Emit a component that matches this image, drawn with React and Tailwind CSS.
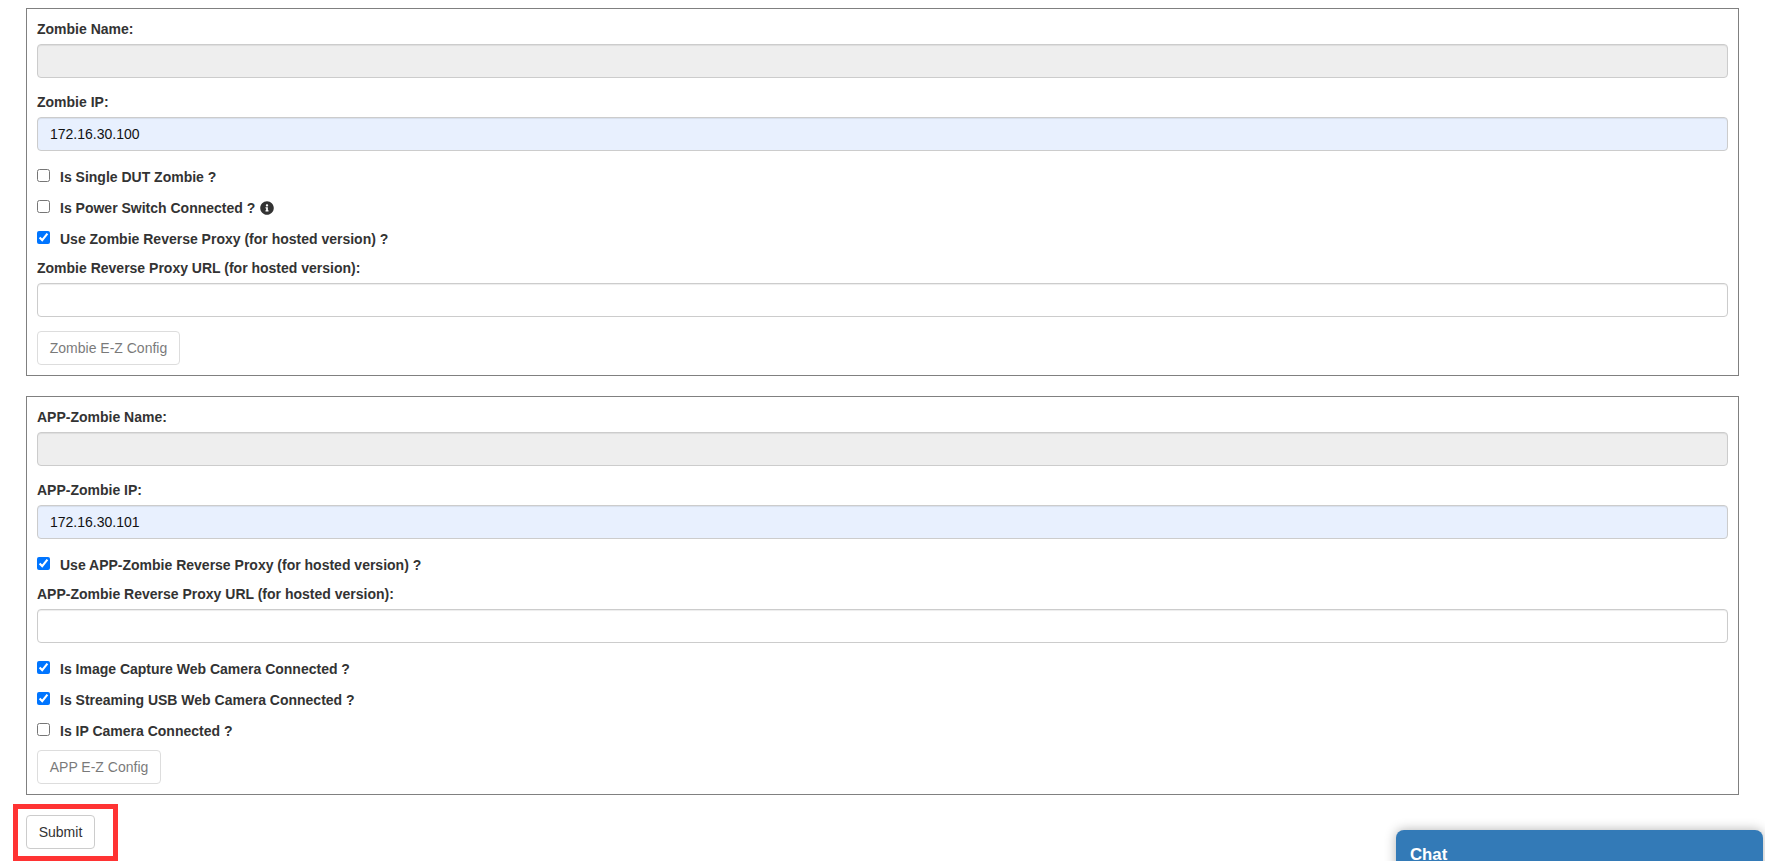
import { FaInfoCircle } from "react-icons/fa";

const inputClass =
  "block h-[34px] w-full rounded-[4px] border border-[#ccc] px-3 text-[14px] text-[#111] shadow-[inset_0_1px_1px_rgba(0,0,0,0.075)] outline-none";

const Field = ({ label, value, disabled, autofilled }) => (
  <div className="mb-[14px]">
    <label className="mb-1 block text-[14px] leading-[21px] font-bold text-[#333]">
      {label}
    </label>
    <input
      readOnly
      disabled={disabled}
      value={value || ""}
      className={`${inputClass} ${disabled ? "bg-[#eee]" : autofilled ? "bg-[#e8f0fe]" : "bg-white"}`}
    />
  </div>
);

const Check = ({ label, checked, children }) => (
  <div className="mb-[10px] flex h-[21px] items-center">
    <input
      type="checkbox"
      readOnly
      checked={!!checked}
      className="m-0 mb-[4px] h-[13px] w-[13px] shrink-0"
    />
    <label className="ml-[10px] text-[14px] leading-[21px] font-bold text-[#333]">
      {label}
    </label>
    {children}
  </div>
);

const ConfigButton = ({ width, children }) => (
  <button
    disabled
    className={`h-[34px] rounded-[4px] border border-[#ccc] bg-white text-[14px] text-[#333] opacity-65 ${width}`}
  >
    {children}
  </button>
);

export default function App() {
  return (
    <div className="relative h-[861px] overflow-hidden bg-white px-[26px] pt-2 font-['Liberation_Sans',Arial,sans-serif]">
      <section className="h-[368px] border border-[#808080] px-[10px] pt-[10px]">
        <Field label="Zombie Name:" disabled />
        <Field label="Zombie IP:" value="172.16.30.100" autofilled />
        <div className="mt-4">
          <Check label="Is Single DUT Zombie ?" />
          <Check label="Is Power Switch Connected ?">
            <FaInfoCircle className="mb-[2px] ml-[5px] text-[14px] text-[#333]" />
          </Check>
          <Check label="Use Zombie Reverse Proxy (for hosted version) ?" checked />
        </div>
        <div className="mt-[-2px]">
          <Field label="Zombie Reverse Proxy URL (for hosted version):" />
        </div>
        <ConfigButton width="w-[143px]">Zombie E-Z Config</ConfigButton>
      </section>

      <section className="mt-5 h-[399px] border border-[#808080] px-[10px] pt-[10px]">
        <Field label="APP-Zombie Name:" disabled />
        <Field label="APP-Zombie IP:" value="172.16.30.101" autofilled />
        <div className="mt-4">
          <Check label="Use APP-Zombie Reverse Proxy (for hosted version) ?" checked />
        </div>
        <div className="mt-[-2px]">
          <Field label="APP-Zombie Reverse Proxy URL (for hosted version):" />
        </div>
        <div className="mt-4 mb-[-2px]">
          <Check label="Is Image Capture Web Camera Connected ?" checked />
          <Check label="Is Streaming USB Web Camera Connected ?" checked />
          <Check label="Is IP Camera Connected ?" />
        </div>
        <ConfigButton width="w-[124px]">APP E-Z Config</ConfigButton>
      </section>

      <button className="mt-5 h-[34px] w-[69px] rounded-[4px] border border-[#ccc] bg-white text-[14px] text-[#333]">
        Submit
      </button>

      {/* annotation round the submit button */}
      <div className="absolute top-[804px] left-[13px] h-[57px] w-[105px] border-[5px] border-[#ff3333]" />

      <div className="absolute top-[830px] right-[2px] h-[80px] w-[367px] rounded-t-[8px] bg-[#337ab7] px-[14px] pt-[13px] shadow-[0_0_12px_rgba(0,0,0,0.3)]">
        <span className="text-[16.8px] leading-[24px] font-bold text-white">Chat</span>
      </div>
    </div>
  );
}
